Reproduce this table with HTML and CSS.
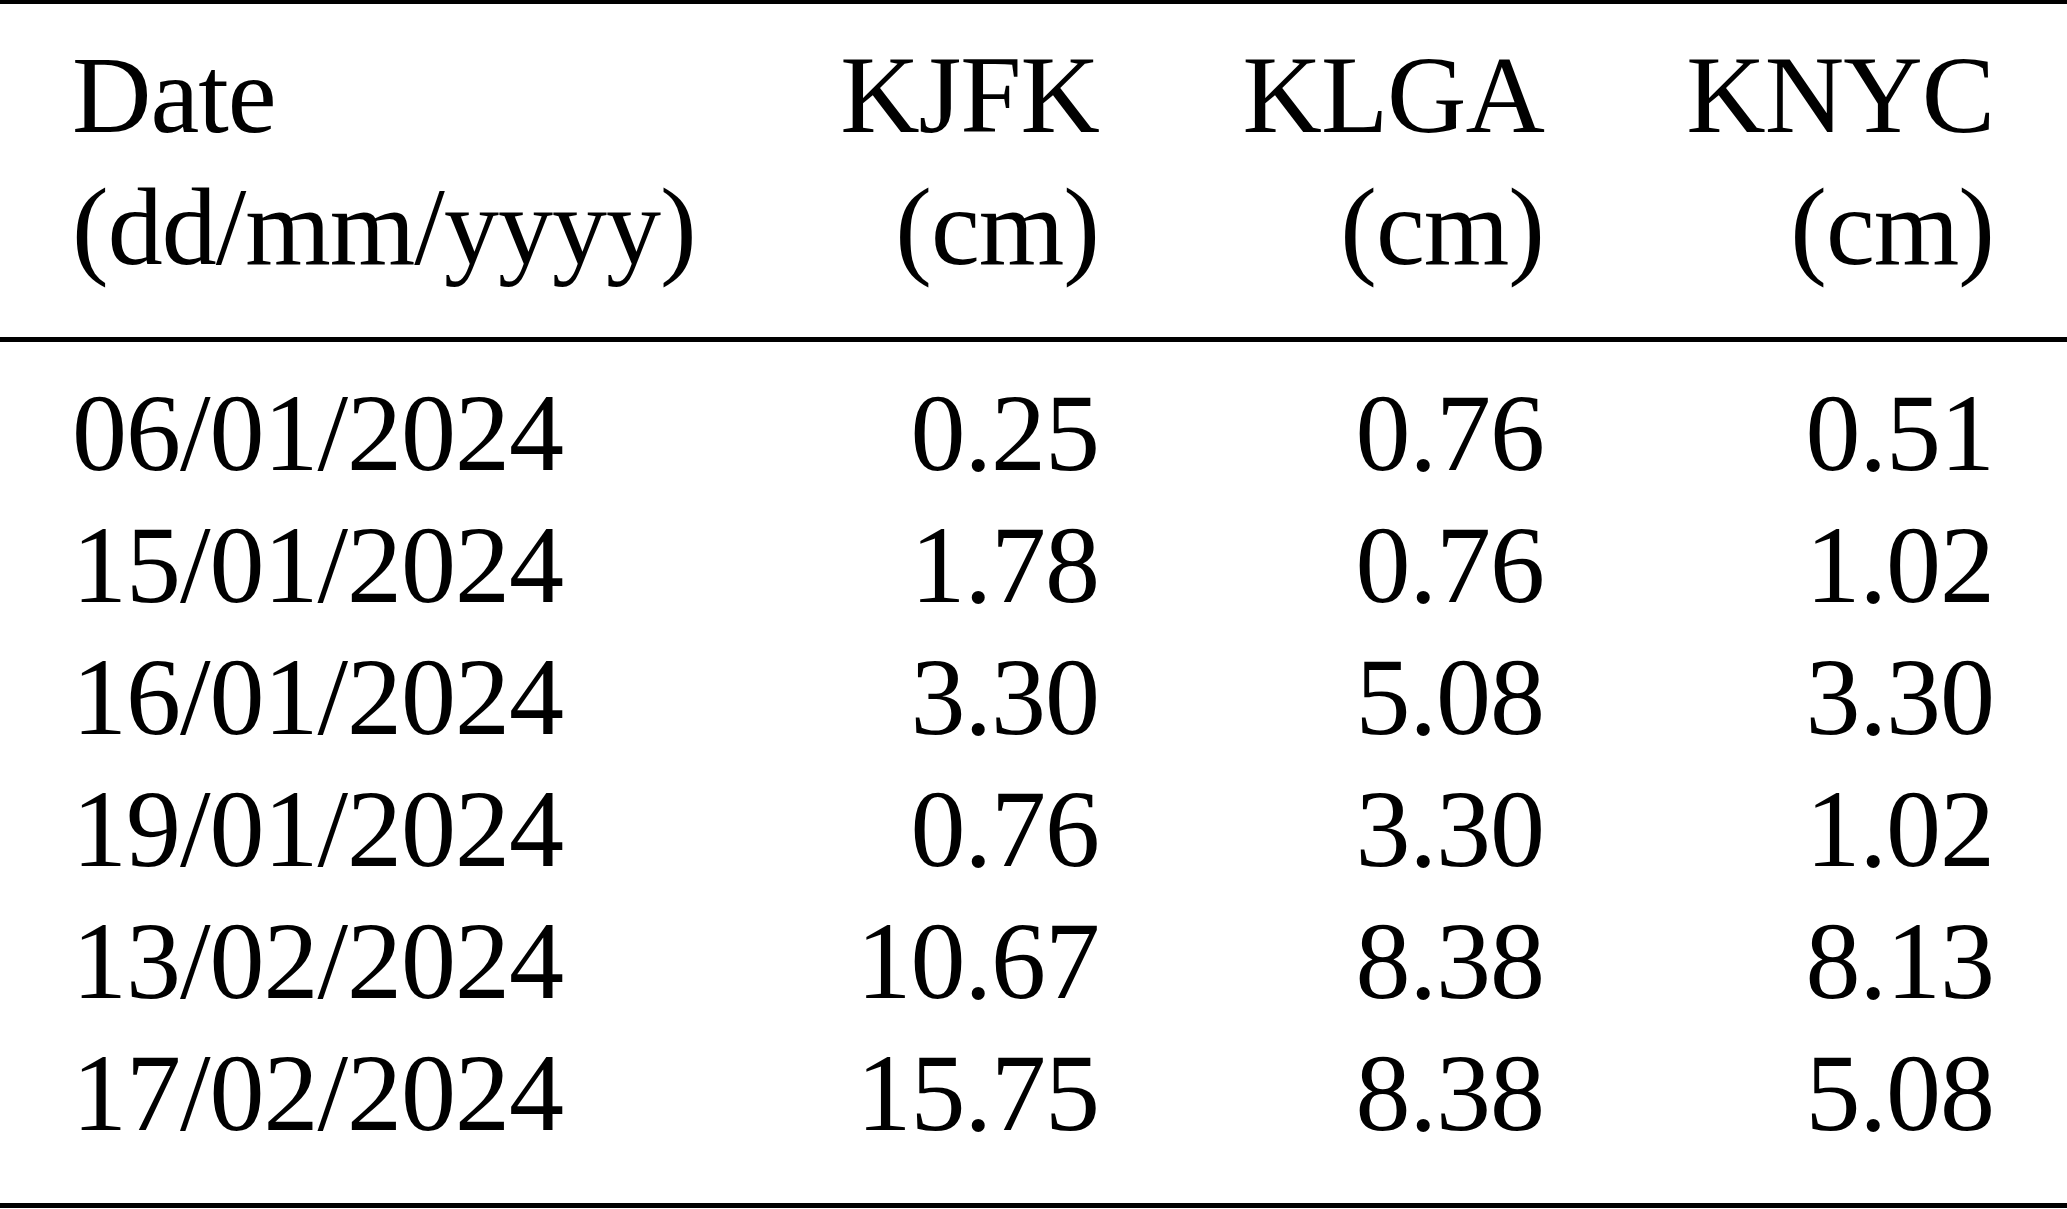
FILE: index.html
```html
<!DOCTYPE html>
<html lang="en">
<head>
<meta charset="utf-8">
<title>Snowfall table</title>
<link rel="stylesheet" href="styles.css">
</head>
<body>
<table class="data">
  <colgroup>
    <col class="c-date">
    <col class="c-jfk">
    <col class="c-lga">
    <col class="c-nyc">
  </colgroup>
  <thead>
    <tr>
      <th class="left">Date<br>(dd/mm/yyyy)</th>
      <th class="num">KJFK<br>(cm)</th>
      <th class="num">KLGA<br>(cm)</th>
      <th class="num last">KNYC<br>(cm)</th>
    </tr>
  </thead>
  <tbody>
    <tr class="first"><td class="left">06/01/2024</td><td class="num">0.25</td><td class="num">0.76</td><td class="num last">0.51</td></tr>
    <tr><td class="left">15/01/2024</td><td class="num">1.78</td><td class="num">0.76</td><td class="num last">1.02</td></tr>
    <tr><td class="left">16/01/2024</td><td class="num">3.30</td><td class="num">5.08</td><td class="num last">3.30</td></tr>
    <tr><td class="left">19/01/2024</td><td class="num">0.76</td><td class="num">3.30</td><td class="num last">1.02</td></tr>
    <tr><td class="left">13/02/2024</td><td class="num">10.67</td><td class="num">8.38</td><td class="num last">8.13</td></tr>
    <tr class="final"><td class="left">17/02/2024</td><td class="num">15.75</td><td class="num">8.38</td><td class="num last">5.08</td></tr>
  </tbody>
</table>
</body>
</html>
```

FILE: styles.css
```css
html, body {
  margin: 0;
  padding: 0;
  background: #ffffff;
}

body {
  font-family: "Liberation Serif", "Times New Roman", serif;
  color: #000000;
}

.data {
  width: 2067px;
  table-layout: fixed;
  border-collapse: separate;
  border-spacing: 0;
  font-size: 110px;
  line-height: 132px;
  letter-spacing: -1px;
}

.c-date { width: 720px; }
.c-jfk { width: 379px; }
.c-lga { width: 445px; }
.c-nyc { width: 523px; }

.data th,
.data td {
  padding: 0;
  font-weight: normal;
  white-space: nowrap;
  vertical-align: top;
}

.data .left {
  text-align: left;
  padding-left: 72px;
}

.data .num {
  text-align: right;
}

.data .last {
  padding-right: 73px;
}

.data thead th {
  border-top: 4px solid #000;
  border-bottom: 5px solid #000;
  padding-top: 25px;
  padding-bottom: 44px;
}

.data tbody tr.first td {
  padding-top: 25px;
}

.data tbody tr.final td {
  padding-bottom: 44px;
  border-bottom: 5px solid #000;
}
```
